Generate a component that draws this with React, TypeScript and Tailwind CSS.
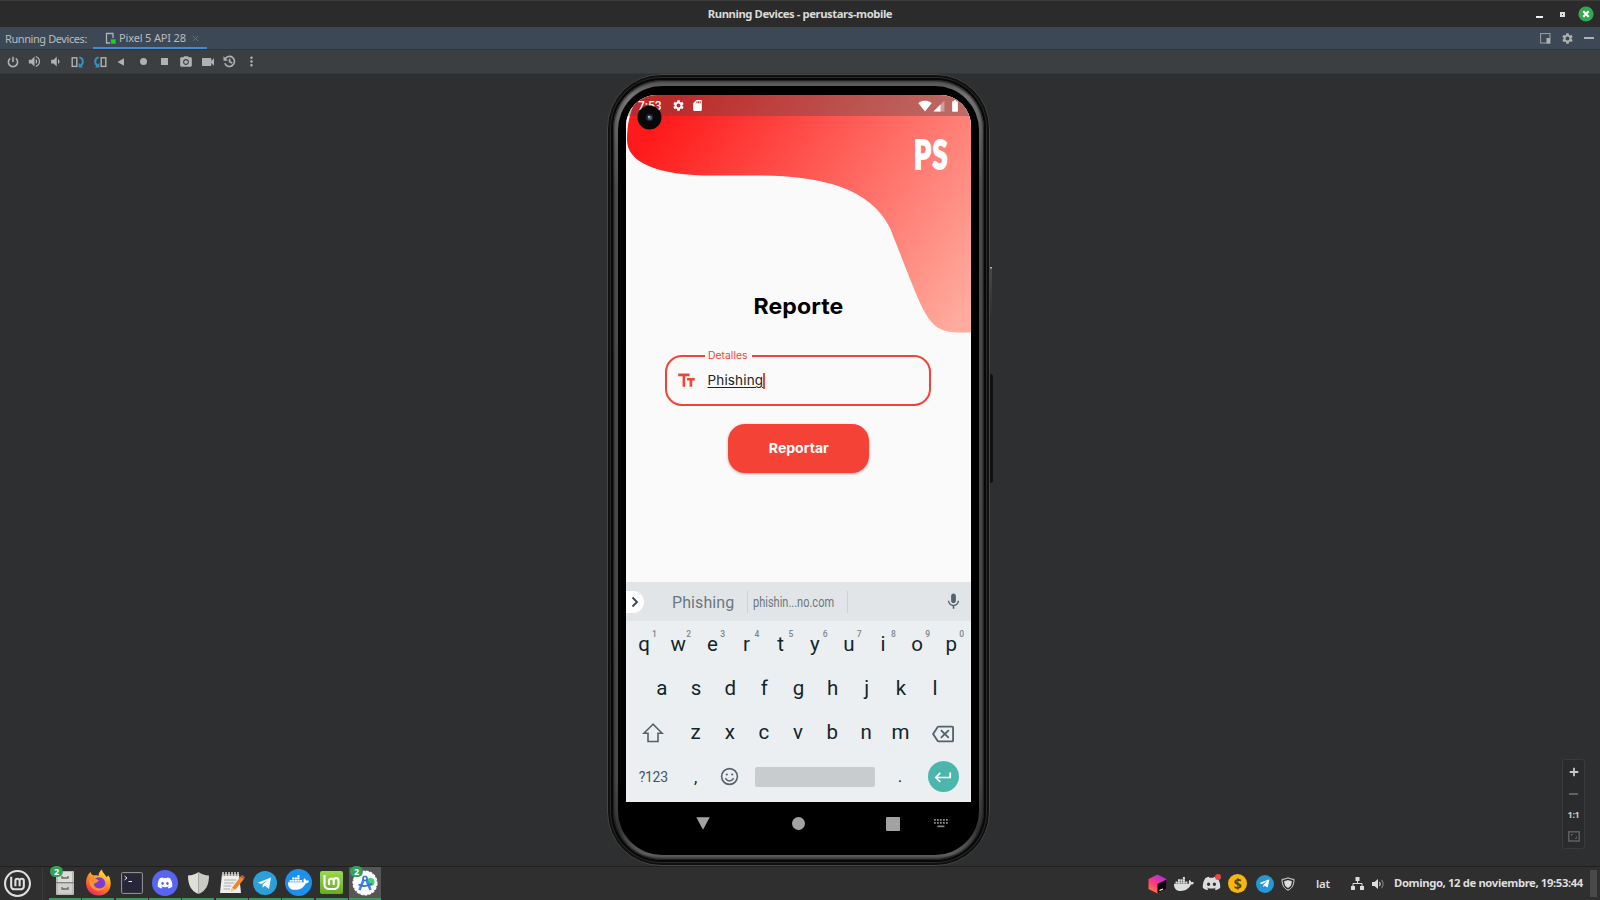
import React from "react";
import { FaDocker, FaDiscord, FaTelegramPlane } from "react-icons/fa";
import { SiLinuxmint } from "react-icons/si";
import {
  MdBatteryFull, MdMic, MdOutlineBackspace, MdSdCard, MdSettings,
  MdSignalWifi4Bar, MdTextFields, MdPhotoCamera, MdVideocam, MdMoreVert,
  MdVolumeUp, MdVolumeDown,
} from "react-icons/md";

const Cell = ({ w, children }: { w: string; children: React.ReactNode }) => (
  <div className={`flex h-full shrink-0 items-center justify-center ${w}`}>{children}</div>
);

function RotateIcon({ flip = false }: { flip?: boolean }) {
  return (
    <svg width="14" height="12" viewBox="0 0 14 12" className={flip ? "-scale-x-100" : ""}>
      <rect x="1.2" y="1.8" width="4.6" height="8.6" fill="none" stroke="#afb1b3" strokeWidth="1.4" />
      <path d="M8.3 1.4C12.8 2 12.8 8 9.5 9.8" fill="none" stroke="#3592c4" strokeWidth="1.9" />
      <path d="M7.6 6.8V11.4H12Z" fill="#3592c4" />
    </svg>
  );
}

const PowerIcon = () => (
  <svg width="12" height="12" viewBox="0 0 12 12" fill="none" stroke="#afb1b3" strokeWidth="1.6">
    <path d="M6 .8V6M3.2 2.4A4.6 4.6 0 1 0 8.8 2.4" />
  </svg>
);

const SnapshotIcon = () => (
  <svg width="13" height="13" viewBox="0 0 13 13" fill="none" stroke="#afb1b3" strokeWidth="1.6">
    <path d="M2 4.2A5 5 0 1 1 1.8 8.2M6.6 3.8V6.8L9.3 8" />
    <path d="M.5 1.3V5.8H5Z" fill="#afb1b3" stroke="none" />
  </svg>
);

function TopBars() {
  return (
    <>
      <div className="grid h-[27px] shrink-0 grid-cols-[1fr_auto_1fr] items-center border-t border-[#3c3c3c] bg-[#2b2b2b]">
        <span />
        <span className="text-[11.3px] font-bold tracking-[-0.44px] text-[#dadada]">Running Devices - perustars-mobile</span>
        <div className="flex items-center justify-end pr-[6px]">
          <span className="mt-[5px] h-[2px] w-[7px] bg-[#eeeeee]" />
          <span className="ml-[17px] flex h-[5px] w-[5px] items-center justify-center border-2 border-[#dedede]" />
          <svg className="ml-[13px]" width="16" height="16" viewBox="0 0 16 16">
            <circle cx="8" cy="8" r="7.6" fill="#35a854" />
            <path d="M5.3 5.3 10.7 10.7M10.7 5.3 5.3 10.7" stroke="#fff" strokeWidth="2.1" />
          </svg>
        </div>
      </div>
      <div className="flex h-[23px] shrink-0 items-center border-b border-[#323436] bg-[#3d4856] text-[11px] text-[#bbbbbb]">
        <span className="mt-[2px] w-[93px] pl-[5px] tracking-[-0.42px] whitespace-nowrap">Running Devices:</span>
        <div className="flex h-full w-[114px] items-center border-b-2 border-[#4a88c7] pt-[3px] pl-3">
          <svg width="12" height="13" viewBox="0 0 12 13">
            <path d="M5 11H1.5V1.5H8V6" fill="none" stroke="#afb1b3" strokeWidth="1.3" />
            <path d="M6 11.5V7.5H10.5V11.5Z" fill="#20d020" stroke="#8a61b5" strokeWidth=".8" />
          </svg>
          <span className="ml-[2px] w-[68px] whitespace-nowrap tracking-[-0.15px]">Pixel 5 API 28</span>
          <svg className="ml-[5px]" width="7" height="7" viewBox="0 0 7 7">
            <path d="M.8.8 6.2 6.2M6.2.8.8 6.2" stroke="#656d76" />
          </svg>
        </div>
        <div className="ml-auto flex items-center gap-[10px] pr-[6px] text-[#afb1b3]">
          <svg width="11" height="11" viewBox="0 0 11 11">
            <rect x=".6" y=".6" width="9.4" height="9.4" fill="none" stroke="#9da2a6" />
            <rect x="6.5" y="5" width="3.5" height="5.5" fill="#afb1b3" />
          </svg>
          <MdSettings size={13} />
          <span className="h-[1.5px] w-[10px] bg-[#afb1b3]" />
        </div>
      </div>
      <div className="flex h-[24px] shrink-0 items-center border-b border-[#343638] bg-[#3c3f41] pl-[2px] text-[#afb1b3]">
        <Cell w="w-[21px]"><PowerIcon /></Cell>
        <Cell w="w-[22px]"><MdVolumeUp size={15} /></Cell>
        <Cell w="w-[21px]"><MdVolumeDown size={15} /></Cell>
        <Cell w="w-[23px]"><RotateIcon /></Cell>
        <Cell w="w-[21px]"><RotateIcon flip /></Cell>
        <Cell w="w-[22px]"><svg width="8" height="8" viewBox="0 0 8 8"><path d="M.5 4 7 .3V7.7Z" fill="#afb1b3" /></svg></Cell>
        <Cell w="w-[22px]"><span className="h-[7px] w-[7px] rounded-full bg-[#afb1b3]" /></Cell>
        <Cell w="w-[21px]"><span className="h-[7px] w-[7px] bg-[#afb1b3]" /></Cell>
        <Cell w="w-[22px]"><MdPhotoCamera size={14} /></Cell>
        <Cell w="w-[22px]"><MdVideocam size={16} /></Cell>
        <Cell w="w-[21px]"><SnapshotIcon /></Cell>
        <Cell w="w-[22px]"><MdMoreVert size={15} /></Cell>
      </div>
    </>
  );
}

function StatusBar() {
  return (
    <div className="flex h-[21px] items-center bg-[#404b4b]/35 pr-[9px] pl-[12px] text-white">
      <span className="w-[26px] font-[Roboto] text-[12px] font-medium">7:53</span>
      <MdSettings className="ml-[8px]" size={13} />
      <MdSdCard className="ml-[6px]" size={13} />
      <MdSignalWifi4Bar className="ml-auto" size={14} />
      <svg className="ml-[1px]" width="12" height="12" viewBox="0 0 12 12">
        <path d="M11.5.5V11.5H.5Z" fill="#fff" opacity=".35" />
        <path d="M7.5 4.5V11.5H.5Z" fill="#fff" />
      </svg>
      <MdBatteryFull className="ml-[3px]" size={14} />
    </div>
  );
}

function ReportForm() {
  return (
    <div className="flex h-[487px] flex-col items-center bg-[#fafafa] font-[Inter]">
      <div className="relative h-[260px] w-full">
        <svg className="absolute top-0 left-0" width="345" height="240" viewBox="0 0 345 240">
          <defs>
            <linearGradient id="wave" gradientUnits="userSpaceOnUse" x1="20" y1="50" x2="320" y2="250">
              <stop offset="0" stopColor="#ff1b1b" />
              <stop offset="1" stopColor="#ffac9f" />
            </linearGradient>
          </defs>
          <path d="M14 0C4 12 1 30 1 45C1 67 30 80.6 88 80.6C103 80.6 112 80.4 128 80.4C192 80.4 243 91 264 133C274 158 286 190 295 210C306 233 315 237.5 335 237.5H345V0Z" fill="url(#wave)" />
        </svg>
        <div className="relative"><StatusBar /></div>
        <div className="absolute top-[36px] left-[288px] flex h-[46px] w-[36px] origin-left scale-x-[0.7] items-center font-[Lato] text-[39px] leading-none font-black tracking-[2px] text-white [-webkit-text-stroke:2px_white]">PS</div>
        <h1 className="absolute top-[195px] w-full scale-x-[1.05] text-center text-[22px] leading-8 font-bold tracking-[0.1px] text-black">Reporte</h1>
      </div>
      <div className="relative flex h-[51px] w-[266px] -translate-x-px items-center rounded-[17px] border-2 border-[#f44336] pl-[9px]">
        <span className="absolute -top-[10px] left-[38px] h-4 w-[47px] bg-[#fafafa] pl-[3px] text-[10px] leading-4 text-[#f44336]">
          <span className="inline-block origin-left scale-x-[1.04]">Detalles</span>
        </span>
        <MdTextFields className="text-[#f44336]" size={21} />
        <div className="ml-[11px] flex items-center">
          <span className="text-[13.5px] tracking-[0.15px] text-[#222222] underline underline-offset-2">Phishing</span>
          <span className="h-[16px] w-[2px] bg-[#f44336]" />
        </div>
      </div>
      <div className="mt-[17.5px] flex h-[49px] w-[141px] items-center justify-center rounded-[17px] bg-[#f44336] text-[13.5px] font-bold text-white shadow-[0_1px_3px_rgba(0,0,0,0.3)]">
        <span className="mt-px scale-x-[1.04]">Reportar</span>
      </div>
    </div>
  );
}

const topKeys = "qwertyuiop".split("");
const Key = ({ c, n }: { c: string; n?: string }) => (
  <div className="relative flex w-[34.15px] items-center justify-center">
    {c}
    {n && <span className="absolute top-[7px] left-[25px] text-[8.5px] leading-[10px] font-medium text-[#7a868c]">{n}</span>}
  </div>
);

function Keyboard() {
  return (
    <div className="flex h-[219px] flex-col bg-[#eceff1] font-[Roboto] text-[#13252c]">
      <div className="flex h-[39px] items-center bg-[#e1e5e8] text-[#6b787e]">
        <div className="flex h-[22px] w-[18px] items-center justify-center rounded-r-full bg-white">
          <svg width="8" height="12" viewBox="0 0 8 12"><path d="M1.5 1.5 6 6 1.5 10.5" fill="none" stroke="#37474f" strokeWidth="1.8" /></svg>
        </div>
        <span className="mt-[2px] ml-[28px] w-[75px] text-[16px] tracking-[0.1px]">Phishing</span>
        <span className="flex h-[22px] w-[101px] items-center border-x border-[#cdd2d5] pt-[3px] pl-[5px] whitespace-nowrap">
          <span className="origin-left scale-x-[0.71] text-[15.5px]">phishin...no.com</span>
        </span>
        <MdMic className="mr-[8px] ml-auto text-[#52636b]" size={19} />
      </div>
      <div className="flex h-[45px] pt-px pl-[1px] text-[20.5px]">
        {topKeys.map((k, i) => <Key key={k} c={k} n={String((i + 1) % 10)} />)}
      </div>
      <div className="flex h-[44px] justify-center text-[20.5px]">
        {"asdfghjkl".split("").map((k) => <Key key={k} c={k} />)}
      </div>
      <div className="flex h-[45px] items-center pl-[2px] text-[20.5px]">
        <Cell w="w-[50.5px]">
          <svg width="22" height="20" viewBox="0 0 22 20"><path d="M11 1.2 1.8 10.3H6V18.5H16V10.3H20.2Z" fill="none" stroke="#52636b" strokeWidth="1.6" /></svg>
        </Cell>
        {"zxcvbnm".split("").map((k) => <Key key={k} c={k} />)}
        <Cell w="w-[52px]"><MdOutlineBackspace size={22} className="mt-[2px] text-[#52636b]" /></Cell>
      </div>
      <div className="flex h-[43px] items-center pl-[2px] text-[17px]">
        <Cell w="w-[50.5px]"><span className="mt-px text-[14px] tracking-[-0.3px] text-[#45555d]">?123</span></Cell>
        <Cell w="w-[34.5px]"><span className="mt-[3px]">,</span></Cell>
        <Cell w="w-[32.5px]">
          <svg width="19" height="19" viewBox="0 0 19 19">
            <circle cx="9.5" cy="9.5" r="7.9" fill="none" stroke="#52636b" strokeWidth="1.6" />
            <circle cx="6.8" cy="7.5" r="1.1" fill="#52636b" /><circle cx="12.2" cy="7.5" r="1.1" fill="#52636b" />
            <path d="M5.3 11.2Q9.5 16.8 13.7 11.2" fill="none" stroke="#52636b" strokeWidth="1.5" />
          </svg>
        </Cell>
        <span className="ml-[9px] h-[20px] w-[120px] rounded-[2px] bg-[#c8cccf]" />
        <Cell w="w-[51px]"><span>.</span></Cell>
        <div className="ml-[2px] flex h-[31px] w-[31px] items-center justify-center rounded-full bg-[#4db6ac]">
          <svg width="18" height="12" viewBox="0 0 18 12"><path d="M16.2 1.5V6.5H2M6.3 1.8 1.7 6.5 6.3 11" fill="none" stroke="#fff" strokeWidth="1.7" /></svg>
        </div>
      </div>
    </div>
  );
}

function NavBar() {
  return (
    <div className="flex h-[53px] pl-[29.5px]">
      <div className="flex h-[43px] items-center">
        <Cell w="w-[95px]"><svg width="14" height="13" viewBox="0 0 14 13"><path d="M.3.3H13.7L7 12.8Z" fill="#a2a2a2" /></svg></Cell>
        <Cell w="w-[95px]"><span className="h-[13px] w-[13px] rounded-full bg-[#a2a2a2]" /></Cell>
        <Cell w="w-[95px]"><span className="h-[14px] w-[14px] rounded-[1px] bg-[#a2a2a2]" /></Cell>
      </div>
      <svg className="mt-[17px] -ml-[7px]" width="14" height="9" viewBox="0 0 14 9" fill="#858585">
        {[0, 1, 2, 3, 4].map((i) => (
          <g key={i}><rect x={i * 3} y="0" width="1.8" height="1.8" /><rect x={i * 3} y="3" width="1.8" height="1.8" /></g>
        ))}
        <rect x="3.4" y="6.5" width="7" height="1.7" />
      </svg>
    </div>
  );
}

function Phone() {
  return (
    <div className="relative h-[792px] w-[383px] shrink-0 rounded-[54px] border border-[#454543] bg-[#080808] p-[5px] shadow-[inset_0_0_0_2px_#101010,inset_0_0_0_3px_#282828]">
      <span className="absolute top-[192px] -right-[3px] h-[50px] w-[2px] bg-gradient-to-b from-[#cccccc] via-[#484848] via-5% to-[#303030]" />
      <span className="absolute top-[299px] -right-[4px] h-[109px] w-[3px] rounded-r bg-[#111111]" />
      <div className="h-full rounded-[49px] bg-[linear-gradient(180deg,#505050_0%,#757575_2%,#606060_7%,#4a4a4a_14%,#474747_90%,#333333_96%,#606060_99.3%,#404040_100%)] px-[5px] pt-[6px] pb-[5px] shadow-[inset_0_0_2px_1px_#151515]">
        <div className="h-full rounded-[44px] bg-black px-[8px] pt-[9px]">
          <div className="relative h-[707px] overflow-hidden rounded-t-[31px] bg-[#eceff1]">
            <ReportForm />
            <Keyboard />
          </div>
          <NavBar />
        </div>
      </div>
      <svg className="absolute top-[30px] left-[29px]" width="25" height="25" viewBox="0 0 25 25">
        <circle cx="12.5" cy="12.5" r="12" fill="#080808" />
        <circle cx="12.5" cy="12.5" r="3.8" fill="#20232a" />
        <circle cx="12.8" cy="12.8" r="2.2" fill="#53627f" />
        <circle cx="12" cy="11.8" r=".9" fill="#dce5ff" />
      </svg>
    </div>
  );
}

function ZoomPanel() {
  return (
    <div className="absolute top-[685px] right-[15px] flex h-[90px] w-[23px] flex-col items-center rounded-[3px] border border-[#3a3b3c] bg-[#2a2b2c] text-[#c8c8c8]">
      <svg className="mt-[7px]" width="10" height="10" viewBox="0 0 10 10"><path d="M5 .7V9.3M.7 5H9.3" stroke="#c8c8c8" strokeWidth="1.8" /></svg>
      <span className="mt-[16px] h-[1.5px] w-[9px] shrink-0 bg-[#606162]" />
      <span className="mt-[12px] text-[9px] leading-[16px] font-bold tracking-[-0.3px]">1:1</span>
      <svg className="mt-[8px]" width="12" height="11" viewBox="0 0 12 11" fill="none" stroke="#5f6061"><rect x=".8" y=".8" width="10.4" height="9.2" strokeWidth="1.5" /><path d="M3.5 5V3.5H5M8.5 5.5V7.5H7" /></svg>
    </div>
  );
}

const Telegram = ({ size }: { size: number }) => (
  <svg width={size} height={size} viewBox="0 0 24 24"><circle cx="12" cy="12" r="12" fill="#2ba0da" /><path d="M4.8 11.8 18 6.5 16 18 11.8 14.8 9.7 16.8 9.5 13.5 15.5 8.5 8.3 13Z" fill="#fff" /></svg>
);

const MintTile = () => (
  <svg width="23" height="23" viewBox="0 0 23 23">
    <defs><linearGradient id="mint" x1="0" y1="0" x2="0" y2="1"><stop stopColor="#9bd84c" /><stop offset="1" stopColor="#67ad21" /></linearGradient></defs>
    <rect width="23" height="23" rx="2" fill="url(#mint)" />
    <path d="M4.5 4V13.5A4.5 4.5 0 0 0 9 18H14A4.5 4.5 0 0 0 18.5 13.5V9.5A2.4 2.4 0 0 0 13.7 9.5V14M13.7 9.5A2.4 2.4 0 0 0 9 9.5V14" fill="none" stroke="#fff" strokeWidth="2.1" />
  </svg>
);

const Badge = () => (
  <span className="absolute -top-px left-[1px] flex h-[11px] w-[13px] items-center justify-center rounded-full bg-[#35a05a] text-[9px] leading-none font-bold text-white">2</span>
);

const Files = () => (
  <svg width="20" height="26" viewBox="0 0 20 26">
    <rect x="1" y="1" width="18" height="24" rx="1" fill="#b9b9b5" />
    <rect x="3" y="2" width="14" height="10" fill="#dcdcd8" /><rect x="3" y="13.5" width="14" height="10" fill="#cfcfcb" />
    <path d="M7 6V8H13V6M7 17V19H13V17" fill="none" stroke="#686865" strokeWidth="1.3" /><path d="M1 12.7H19" stroke="#777" />
  </svg>
);

const Firefox = () => (
  <svg width="27" height="27" viewBox="0 0 27 27">
    <defs><linearGradient id="fire" x1=".8" y1="0" x2=".3" y2="1"><stop stopColor="#fff14a" /><stop offset=".5" stopColor="#ff8a22" /><stop offset="1" stopColor="#f6235f" /></linearGradient></defs>
    <path d="M3 6C4 5 5 3 5.5 3C6 5 7 6 9 6.5C11 6 13 6.5 13.5 7C13.5 4 15 2 17 .5C17.2 4 20 4.8 21.5 8L23.5 6.5C28 14 26 26.5 13.5 26.5C3 26.5-2 15.5 3 6Z" fill="url(#fire)" />
    <circle cx="14" cy="14.5" r="6.3" fill="#7a3cd8" />
    <path d="M4 11C7 8 11 9 13.8 11.5C12.5 13.8 10 13.8 8.8 15C9 20 18 21.5 20.5 15.5C21 23.5 5 25.5 4 11Z" fill="#ff942b" />
  </svg>
);

const Terminal = () => (
  <svg width="22" height="22" viewBox="0 0 22 22"><rect x=".6" y=".6" width="20.8" height="20.8" rx="1" fill="#272739" stroke="#9a9a9a" /><path d="M3.5 4 6 6 3.5 8M7.5 9.5H11" fill="none" stroke="#eee" /></svg>
);

const Shield = () => (
  <svg width="23" height="24" viewBox="0 0 23 24"><path d="M11.5 1Q7 4.3 1 4.5C1 14 4 20 11.5 23Z" fill="#dfdfda" /><path d="M11.5 1Q16 4.3 22 4.5C22 14 19 20 11.5 23Z" fill="#c9cac5" /></svg>
);

const Notes = () => (
  <svg width="26" height="24" viewBox="0 0 26 24">
    <path d="M3 3H20L22 22H1Z" fill="#f0efeb" /><path d="M3 3H20V5H3Z" fill="#8a8a88" />
    {[4, 7, 10, 13, 16, 19].map((x) => <path key={x} d={`M${x} 1V5`} stroke="#e2e2e2" strokeWidth="1.4" />)}
    <path d="M5 9H17M5 12H15M4.5 15H12M4.5 18H11" stroke="#aaa" />
    <path d="M13 17 21.5 5.5 25 8 16.5 18.5 12 20.5Z" fill="#e9892c" /><path d="M21.5 5.5 23 3.8 26 6.2 25 8Z" fill="#e04d44" /><path d="M13 17 12 20.5 16.5 18.5Z" fill="#ead5a8" />
  </svg>
);

const Studio = () => (
  <svg width="26" height="26" viewBox="0 0 26 26">
    <circle cx="13" cy="13" r="11.8" fill="#fff" stroke="#fff" strokeWidth="1.5" strokeDasharray="3 1" />
    <circle cx="18.5" cy="12" r="4" fill="#45cf76" />
    <path d="M13 6 7.5 20M13 6 18.5 20" stroke="#4285f4" strokeWidth="2.6" /><path d="M6.5 14.5Q13 18 20 13.5" fill="none" stroke="#3371cc" strokeWidth="1.7" />
    <circle cx="13" cy="8.5" r="2" fill="#fff" stroke="#3973c7" strokeWidth="1.6" />
  </svg>
);

function Taskbar() {
  const apps: { icon: React.ReactNode; badge?: boolean; active?: boolean }[] = [
    { icon: <Files />, badge: true },
    { icon: <Firefox /> },
    { icon: <Terminal /> },
    { icon: <span className="flex h-[26px] w-[26px] items-center justify-center rounded-full bg-[#5865f2]"><FaDiscord size={16} color="#fff" /></span> },
    { icon: <Shield /> },
    { icon: <Notes /> },
    { icon: <Telegram size={24} /> },
    { icon: <span className="flex h-[27px] w-[27px] items-center justify-center rounded-full bg-[#1d90ee]"><FaDocker size={21} color="#fff" /></span> },
    { icon: <MintTile /> },
    { icon: <Studio />, badge: true, active: true },
  ];
  return (
    <div className="flex h-[34px] shrink-0 items-center border-t border-[#202020] bg-[#2f2f2f]">
      <Cell w="w-[42px]">
        <SiLinuxmint size={27} color="#dfdfdf" className="mr-[7px]" />
      </Cell>
      <span className="mr-[6px] h-full w-px bg-[#3b3b3b]" />
      <div className="flex h-full gap-[1.35px]">
        {apps.map((a, i) => (
          <div key={i} className={`relative flex h-full w-[32px] items-center justify-center border-b-2 border-[#3c9858] ${a.active ? "bg-[#565656]" : ""}`}>
            {a.icon}
            {a.badge && <Badge />}
          </div>
        ))}
      </div>
      <div className="ml-auto flex h-full items-center text-[#dddddd]">
        <Cell w="w-[26.75px]">
          <svg width="19" height="20" viewBox="0 0 19 20">
            <defs><linearGradient id="cube" x1="0" y1="1" x2=".6" y2="0"><stop stopColor="#ff8a35" /><stop offset=".5" stopColor="#fb3f79" /><stop offset="1" stopColor="#b52be0" /></linearGradient></defs>
            <path d="M9.5.5 18.5 5V15L9.5 19.5.5 15V5Z" fill="url(#cube)" />
            <path d="M9.5 10 18.5 5.5V15L9.5 19.5Z" fill="#090909" /><path d="M11.5 16.5 15 15" stroke="#fff" strokeWidth="1.2" />
          </svg>
        </Cell>
        <Cell w="w-[26.75px]"><FaDocker size={20} /></Cell>
        <Cell w="w-[26.75px]"><span className="relative"><FaDiscord size={19} /><span className="absolute top-0 right-0 h-[6px] w-[6px] rounded-full bg-[#ef4444]" /></span></Cell>
        <Cell w="w-[26.75px]"><span className="flex h-[19px] w-[19px] items-center justify-center rounded-full bg-[#f7b711] text-[14px] font-bold text-[#59400b]">$</span></Cell>
        <Cell w="w-[26.75px]"><span className="flex h-[18px] w-[18px] items-center justify-center rounded-full bg-[#2597d3] pr-px"><FaTelegramPlane size={11} color="#fff" /></span></Cell>
        <Cell w="w-[20px]"><svg width="14" height="14" viewBox="0 0 14 14"><path d="M7 .8Q4 2.3 1 2.4C1 8 3 11.5 7 13.2C11 11.5 13 8 13 2.4Q10 2.3 7 .8Z" fill="none" stroke="#ddd" /><path d="M7 3Q5 4 3.2 4C3.2 8 4.6 10 7 11C9.4 10 10.8 8 10.8 4Q9 4 7 3Z" fill="#ddd" /></svg></Cell>
        <Cell w="w-[50px]"><span className="text-[11.5px] font-semibold tracking-[-0.2px]">lat</span></Cell>
        <Cell w="w-[19px]"><svg width="13" height="13" viewBox="0 0 13 13" fill="#ddd"><path d="M4.5 0H8.5V4H4.5ZM0 9H4V13H0ZM9 9H13V13H9Z" /><path d="M6.5 4V6.5M2 9V6.5H11V9" fill="none" stroke="#ddd" /></svg></Cell>
        <Cell w="w-[22px]">
          <svg width="14" height="12" viewBox="0 0 14 12"><path d="M1 4H3.5L7 1V11L3.5 8H1Z" fill="#ddd" /><path d="M8.5 4Q10 6 8.5 8" fill="none" stroke="#ddd" strokeWidth="1.2" /><path d="M10.5 2Q13.8 6 10.5 10" fill="none" stroke="#777" strokeWidth="1.2" /></svg>
        </Cell>
        <span className="ml-[5px] w-[189px] text-[11.3px] font-bold tracking-[-0.38px] whitespace-nowrap">Domingo, 12 de noviembre, 19:53:44</span>
        <span className="mr-[3px] ml-[7px] h-[27px] w-[7px] bg-[#494949]" />
      </div>
    </div>
  );
}

export default function App() {
  return (
    <div className="flex h-[900px] w-[1600px] flex-col overflow-hidden bg-[#2e2f30] font-['Noto_Sans',sans-serif]">
      <TopBars />
      <main className="relative flex min-h-0 flex-1 justify-center overflow-hidden pr-[3px]">
        <Phone />
        <ZoomPanel />
      </main>
      <Taskbar />
    </div>
  );
}
